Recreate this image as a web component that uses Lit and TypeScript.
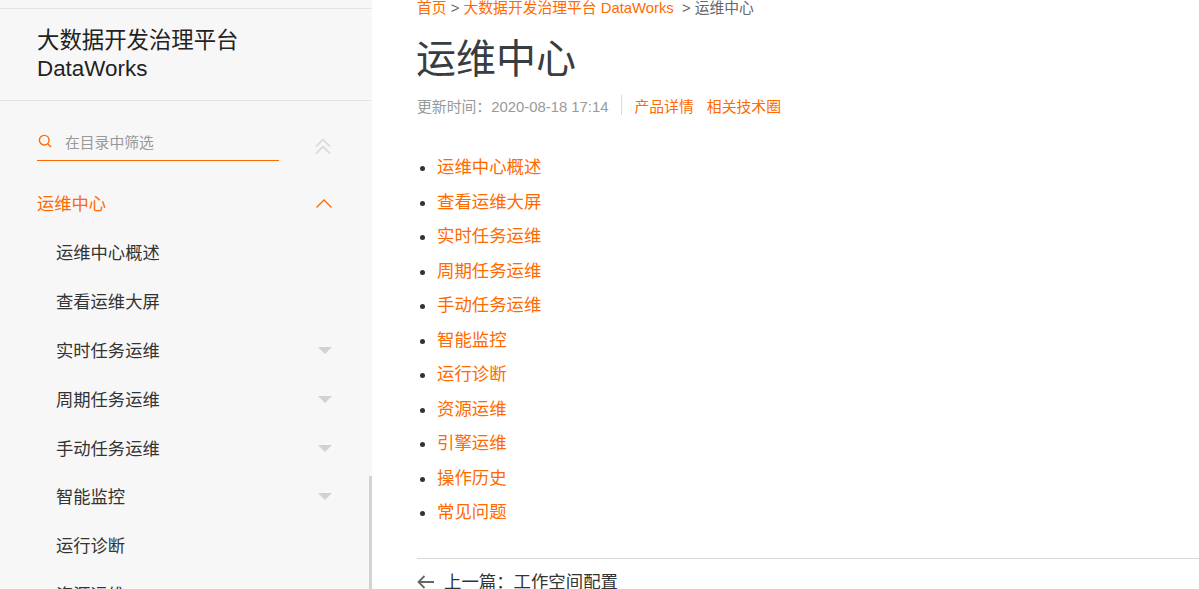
import { LitElement, html, css, svg } from "lit";
import { customElement } from "lit/decorators.js";

const tree: [string, boolean][] = [
  ["运维中心概述", false],
  ["查看运维大屏", false],
  ["实时任务运维", true],
  ["周期任务运维", true],
  ["手动任务运维", true],
  ["智能监控", true],
  ["运行诊断", false],
  ["资源运维", false],
];
const links = ["运维中心概述", "查看运维大屏", "实时任务运维", "周期任务运维", "手动任务运维", "智能监控", "运行诊断", "资源运维", "引擎运维", "操作历史", "常见问题"];

@customElement("app-root")
export class AppRoot extends LitElement {
  static styles = css`
    :host {
      display: flex;
      width: 1199px;
      height: 589px;
      overflow: hidden;
      background: #fff;
      color: #333;
      font-family: "Liberation Sans", "Noto Sans CJK SC", sans-serif;
    }
    a { color: #ff6a00; text-decoration: none; }
    .side {
      position: relative;
      flex: 0 0 372px;
      height: 589px;
      overflow: hidden;
      background: #f7f7f7;
      padding-top: 8px;
      box-sizing: border-box;
    }
    .brand {
      border-top: 1px solid #e5e5e5;
      border-bottom: 1px solid #e5e5e5;
      padding: 18px 37px;
      height: 55px;
      font-size: 22.4px;
      line-height: 28px;
      color: #222;
    }
    .filter {
      display: flex;
      align-items: flex-start;
      padding: 24px 37px 0;
      height: 36px;
    }
    .box {
      flex: 0 0 242px;
      height: 36px;
      border-bottom: 1px solid #ff6a00;
      display: flex;
      align-items: center;
      gap: 13px;
      padding: 0 0 3px 1px;
      box-sizing: border-box;
      font-size: 14.8px;
      color: #999;
    }
    .box svg { display: block; }
    .collapse { margin: 13px 0 0 36px; display: block; }
    .group {
      display: flex;
      align-items: center;
      justify-content: space-between;
      margin-top: 17.5px;
      padding: 0 40px 1px 37px;
      height: 48px;
      font-size: 17.3px;
      color: #ff6a00;
    }
    .group svg { margin-top: 1px; }
    .item {
      display: flex;
      align-items: center;
      justify-content: space-between;
      height: 48.8px;
      padding: 0 40px 0 56px;
      font-size: 17.3px;
      color: #333;
    }
    .tri {
      width: 0;
      height: 0;
      margin-top: 2px;
      border-left: 7.5px solid transparent;
      border-right: 7.5px solid transparent;
      border-top: 7.5px solid #d2d2d2;
    }
    .thumb {
      position: absolute;
      right: 0;
      top: 476px;
      bottom: 0;
      width: 3px;
      background: #d3d3d3;
    }
    .main {
      flex: 1;
      min-width: 0;
      padding-left: 45px;
    }
    .crumb {
      margin-top: -1px;
      height: 18px;
      line-height: 18px;
      font-size: 14.8px;
      color: #666;
      white-space: pre;
    }
    h1 {
      margin: 14px 0 0 -1px;
      font-size: 40px;
      line-height: 56px;
      font-weight: 400;
      color: #373d41;
    }
    .meta {
      display: flex;
      align-items: center;
      margin-top: 8px;
      height: 20px;
      font-size: 14.85px;
      color: #999;
    }
    .meta .sep { width: 1px; height: 20px; background: #dcdcdc; margin: 0 12px 0 13px; }
    .meta a { margin-right: 13px; }
    ul {
      margin: 35.45px 0 0;
      padding: 0 0 0 20px;
      list-style: disc;
    }
    li {
      height: 34.5px;
      line-height: 34.5px;
      font-size: 17.4px;
    }
    .prev {
      margin-top: 28.55px;
      border-top: 1px solid #d9d9d9;
      display: flex;
      align-items: center;
      gap: 9px;
      padding-top: 11px;
      font-size: 17.4px;
      line-height: 24px;
      color: #333;
    }
    .prev svg { display: block; flex: none; }
  `;

  render() {
    return html`
      <aside class="side">
        <div class="brand">大数据开发治理平台<br />DataWorks</div>
        <div class="filter">
          <div class="box">
            <svg width="14" height="14" viewBox="0 0 14 14" fill="none" stroke="#ff6a00" stroke-width="1.4">
              ${svg`<circle cx="6.2" cy="6.2" r="4.8"></circle><path d="M9.7 9.7 L13 13"></path>`}
            </svg>
            <span>在目录中筛选</span>
          </div>
          <svg class="collapse" width="16" height="17" viewBox="0 0 16 17" fill="none" stroke="#dcdcdc" stroke-width="1.9">
            ${svg`<path d="M1 8.5 L8 1.5 L15 8.5"></path><path d="M1 15.5 L8 8.5 L15 15.5"></path>`}
          </svg>
        </div>
        <div class="group">
          <span>运维中心</span>
          <svg width="16" height="9" viewBox="0 0 16 9" fill="none" stroke="#ff6a00" stroke-width="1.3">
            ${svg`<path d="M0.5 8.5 L8 1 L15.5 8.5"></path>`}
          </svg>
        </div>
        ${tree.map(([t, c]) => html`<div class="item"><span>${t}</span>${c ? html`<i class="tri"></i>` : null}</div>`)}
        <div class="thumb"></div>
      </aside>
      <main class="main">
        <div class="crumb"><a>首页</a> &gt;<a> 大数据开发治理平台 DataWorks</a>  &gt; 运维中心</div>
        <h1>运维中心</h1>
        <div class="meta">
          <span>更新时间：2020-08-18 17:14</span>
          <i class="sep"></i>
          <a>产品详情</a><a>相关技术圈</a>
        </div>
        <ul>${links.map((l) => html`<li><a>${l}</a></li>`)}</ul>
        <div class="prev">
          <svg width="18" height="14" viewBox="0 0 18 14" fill="none" stroke="#666" stroke-width="1.8">
            ${svg`<path d="M7.5 1 L1.5 7 L7.5 13 M1.5 7 H17"></path>`}
          </svg>
          <span>上一篇：工作空间配置</span>
        </div>
      </main>
    `;
  }
}
